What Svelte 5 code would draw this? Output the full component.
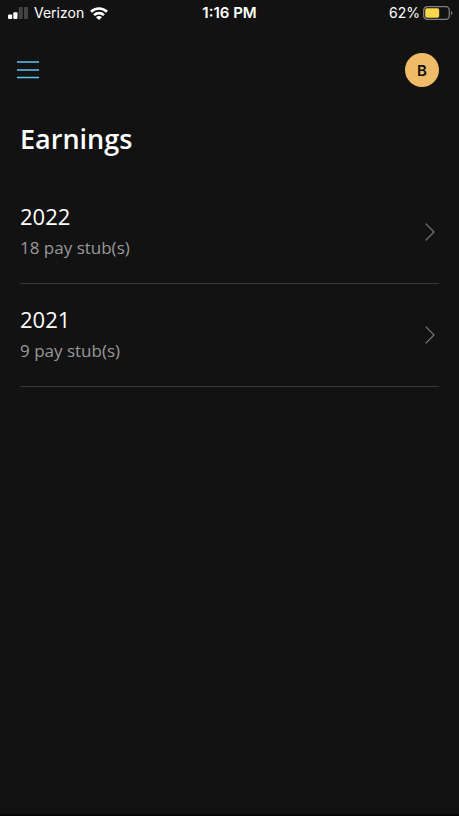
<script>
	const years = [
		{ year: 2022, stubs: 18 },
		{ year: 2021, stubs: 9 }
	];
	const battery = 62;
</script>

<svelte:head>
	<title>Earnings</title>
</svelte:head>

<div class="screen">
	<div class="status">
		<div class="carrier">
			<svg width="20" height="12" viewBox="0 0 20 12" aria-hidden="true">
				<rect x="0" y="7.5" width="4.2" height="4.5" rx="1" fill="#fff" />
				<rect x="5.3" y="5.2" width="4.2" height="6.8" rx="1" fill="#fff" />
				<rect x="10.7" y="0" width="4" height="12" rx="1" fill="#444" />
				<rect x="16" y="0" width="4" height="12" rx="1" fill="#444" />
			</svg>
			<span>Verizon</span>
			<svg width="18" height="13" viewBox="0 0 18 13" aria-hidden="true">
				<g fill="none" stroke="#fff" stroke-width="2.6">
					<path d="M1 4.8a11.4 11.4 0 0 1 16 0" />
					<path d="M4 8.1a7.2 7.2 0 0 1 10 0" />
				</g>
				<path d="M9 13 6 10.2a4.2 4.2 0 0 1 6 0Z" fill="#fff" />
			</svg>
		</div>
		<div class="time">1:16 PM</div>
		<div class="power">
			<span>{battery}%</span>
			<svg width="30" height="14" viewBox="0 0 30 14" aria-hidden="true">
				<rect x="0.7" y="0.7" width="25.6" height="12.6" rx="3.6" fill="none" stroke="#808080" stroke-width="1.3" />
				<rect x="2.2" y="2.2" width="14" height="9.6" rx="1.8" fill="#f8d74a" />
				<path d="M28 4.8c1.8.8 1.8 3.6 0 4.4Z" fill="#808080" />
			</svg>
		</div>
	</div>

	<header>
		<button class="menu" aria-label="Menu">
			<svg width="22" height="18" viewBox="0 0 22 18">
				<path d="M0 1h22M0 9h22M0 16.5h22" stroke="#5fc3f0" stroke-width="1.7" />
			</svg>
		</button>
		<button class="avatar">B</button>
	</header>

	<main>
		<h1>Earnings</h1>
		<ul>
			{#each years as item}
				<li>
					<a href={`#${item.year}`}>
						<span class="info">
							<span class="year">{item.year}</span>
							<span class="stubs">{item.stubs} pay stub(s)</span>
						</span>
						<svg width="10" height="18" viewBox="0 0 10 18" aria-hidden="true">
							<path d="M0.7 0.7 9 9 0.7 17.3" fill="none" stroke="#808080" stroke-width="1.1" />
						</svg>
					</a>
				</li>
			{/each}
		</ul>
	</main>
</div>

<style>
	:global(body) {
		margin: 0;
		background: #121212;
	}

	.screen {
		box-sizing: border-box;
		min-height: 100vh;
		border-bottom: 2px solid #080508;
		background: #121212;
		color: #fff;
		font-family: 'Open Sans', sans-serif;
	}

	.status {
		display: grid;
		grid-template-columns: 1fr auto 1fr;
		align-items: center;
		height: 26px;
		padding: 0 6px;
		font-family: Inter, sans-serif;
		font-size: 14px;
		line-height: 20px;
	}

	.carrier,
	.power {
		display: flex;
		align-items: center;
	}

	.carrier {
		gap: 6px;
		padding-left: 2px;
	}

	.power {
		justify-content: flex-end;
		gap: 3px;
	}

	.time {
		font-size: 15px;
		font-weight: 600;
	}

	header {
		display: flex;
		align-items: center;
		justify-content: space-between;
		padding: 27px 20px 0 17px;
	}

	button {
		padding: 0;
		border: 0;
		cursor: pointer;
	}

	.menu {
		display: flex;
		background: none;
	}

	.avatar {
		width: 34px;
		height: 34px;
		border-radius: 50%;
		background: #efbb68;
		color: #111;
		font-family: Inter, sans-serif;
		font-size: 15px;
		font-weight: 600;
	}

	main {
		padding: 34px 20px 0;
	}

	h1 {
		margin: 0;
		font-size: 27px;
		font-weight: 600;
		line-height: 36px;
	}

	ul {
		margin: 24px 0 0;
		padding: 0;
		list-style: none;
	}

	li {
		border-bottom: 1px solid #383838;
	}

	a {
		display: flex;
		align-items: center;
		justify-content: space-between;
		height: 102px;
		padding-right: 4px;
		color: #fff;
		text-decoration: none;
	}

	.info {
		display: flex;
		flex-direction: column;
		gap: 4px;
		padding-bottom: 4px;
	}

	.year {
		font-size: 22px;
		line-height: 32px;
	}

	.stubs {
		color: #999;
		font-size: 17px;
		line-height: 24px;
	}
</style>
